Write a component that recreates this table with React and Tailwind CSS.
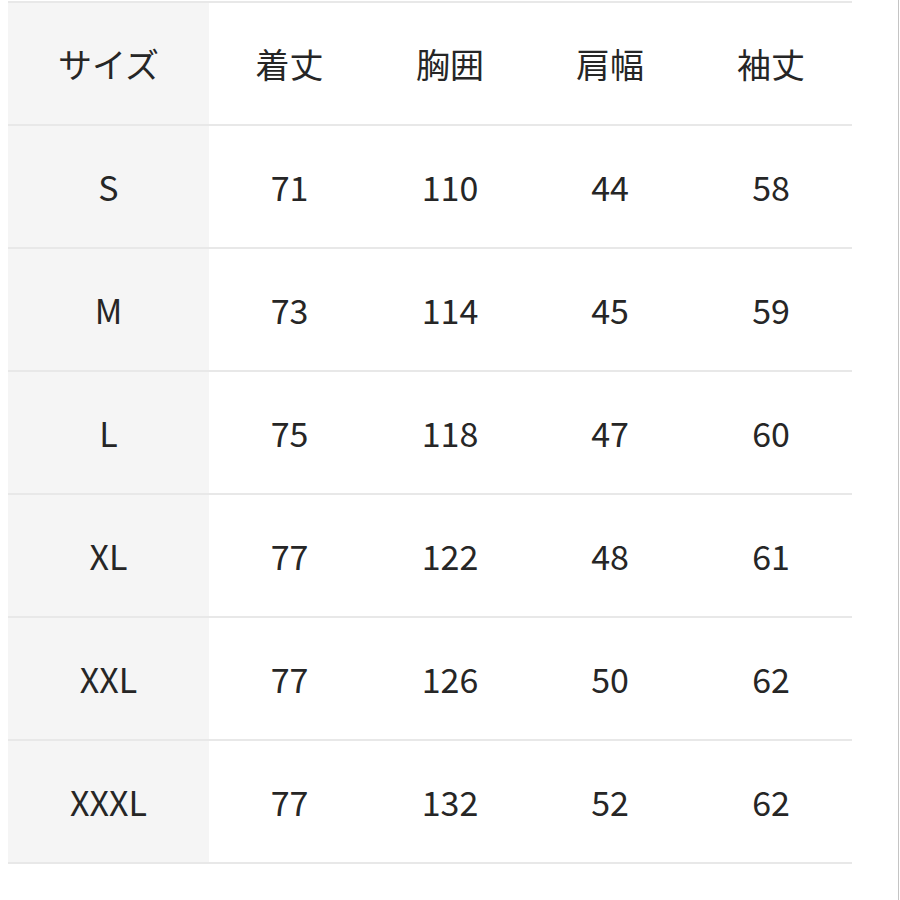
import React from "react";

const head = ["サイズ", "着丈", "胸囲", "肩幅", "袖丈"];
const rows = [
  ["S", "71", "110", "44", "58"],
  ["M", "73", "114", "45", "59"],
  ["L", "75", "118", "47", "60"],
  ["XL", "77", "122", "48", "61"],
  ["XXL", "77", "126", "50", "62"],
  ["XXXL", "77", "132", "52", "62"],
];

function Row({ cells }) {
  return (
    <div className="grid grid-cols-[201px_161px_160px_160px_162px] h-[123px] border-b-2 border-[#e8e8e8]">
      {cells.map((c, i) => (
        <div
          key={i}
          className={
            "flex items-center justify-center " + (i === 0 ? "bg-[#f5f5f5]" : "bg-white")
          }
        >
          {c}
        </div>
      ))}
    </div>
  );
}

export default function App() {
  return (
    <div className="w-[900px] h-[900px] bg-white">
      <div
        className="w-[899px] h-[900px] bg-white flex border-r-[1.5px] border-[#c4c4c4] text-[34px] text-[#262626]"
        style={{ fontFamily: '"Noto Sans CJK JP", "Noto Sans", sans-serif' }}
      >
        <div className="ml-[8px] mt-[1px] w-[844px] border-t-2 border-[#e8e8e8] self-start">
          <Row cells={head} />
          {rows.map((r, i) => (
            <Row key={i} cells={r} />
          ))}
        </div>
      </div>
    </div>
  );
}
